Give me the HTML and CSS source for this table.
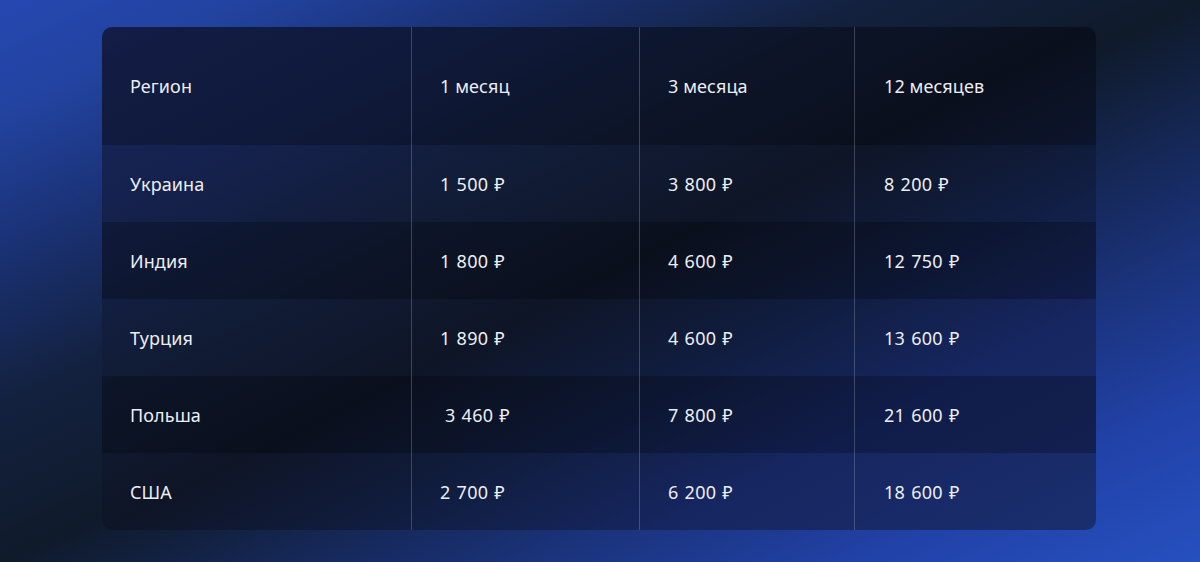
FILE: index.html
```html
<!DOCTYPE html>
<html lang="ru">
<head>
<meta charset="utf-8">
<title>Цены по регионам</title>
<link rel="stylesheet" href="styles.css">
</head>
<body>
<div class="page">
  <div class="card">
    <div class="row row-head row-dark">
      <div class="cell">Регион</div>
      <div class="cell">1 месяц</div>
      <div class="cell">3 месяца</div>
      <div class="cell">12 месяцев</div>
    </div>
    <div class="row">
      <div class="cell">Украина</div>
      <div class="cell num">1 500 ₽</div>
      <div class="cell num">3 800 ₽</div>
      <div class="cell num">8 200 ₽</div>
    </div>
    <div class="row row-dark">
      <div class="cell">Индия</div>
      <div class="cell num">1 800 ₽</div>
      <div class="cell num">4 600 ₽</div>
      <div class="cell num">12 750 ₽</div>
    </div>
    <div class="row">
      <div class="cell">Турция</div>
      <div class="cell num">1 890 ₽</div>
      <div class="cell num">4 600 ₽</div>
      <div class="cell num">13 600 ₽</div>
    </div>
    <div class="row row-dark">
      <div class="cell">Польша</div>
      <div class="cell num cell-shift">3 460 ₽</div>
      <div class="cell num">7 800 ₽</div>
      <div class="cell num">21 600 ₽</div>
    </div>
    <div class="row">
      <div class="cell">США</div>
      <div class="cell num">2 700 ₽</div>
      <div class="cell num">6 200 ₽</div>
      <div class="cell num">18 600 ₽</div>
    </div>
  </div>
</div>
</body>
</html>
```

FILE: styles.css
```css
* { box-sizing: border-box; }

html, body {
  margin: 0;
  padding: 0;
  width: 1200px;
  height: 562px;
  overflow: hidden;
}

body {
  font-family: "Noto Sans", "Open Sans", "DejaVu Sans", sans-serif;
  color: #eceef4;
  background: linear-gradient(to bottom right,
    #2647b0 0%,
    #2243a0 10%,
    #1a3275 22%,
    #13213f 36%,
    #0f1a2a 50%,
    #172c65 66%,
    #2142a8 86%,
    #2650bf 100%);
}

.page {
  padding: 27px 0 0 102px;
}

.card {
  width: 994px;
  border-radius: 10px;
  overflow: hidden;
  background: linear-gradient(to bottom right,
    #19275c 0%,
    #15224f 17%,
    #111c36 35%,
    #0e1526 50%,
    #101c3c 62%,
    #162660 78%,
    #1a2e6e 100%);
}

.row {
  display: grid;
  grid-template-columns: 309px 228px 215px 242px;
  height: 77px;
}

.row-head {
  height: 118px;
}

.row-dark {
  background: rgba(0, 0, 0, 0.24);
}

.cell {
  display: flex;
  align-items: center;
  padding-left: 28px;
  font-size: 18px;
  letter-spacing: 0.1px;
  white-space: pre;
}

.num {
  word-spacing: 1px;
  letter-spacing: 0.3px;
}

.cell + .cell {
  border-left: 1px solid rgba(160, 170, 195, 0.32);
}

.cell:last-child {
  padding-left: 29px;
}

.cell-shift {
  padding-left: 33px;
}
```
